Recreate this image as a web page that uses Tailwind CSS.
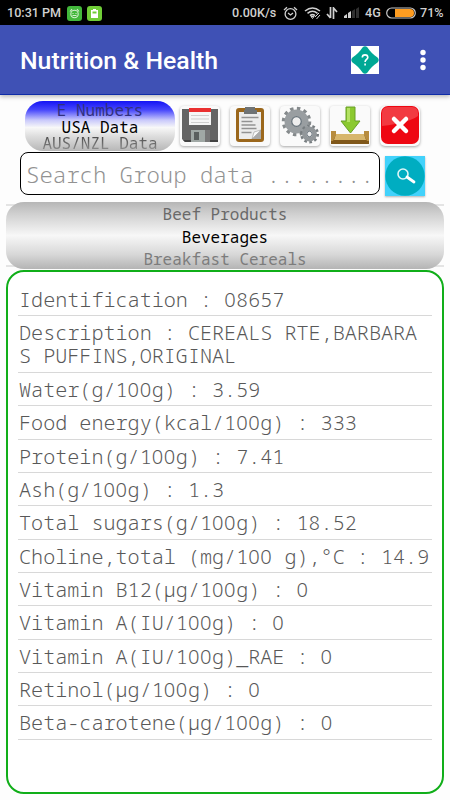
<!DOCTYPE html>
<html lang="en"><head><meta charset="utf-8"><title>Nutrition &amp; Health</title>
<script src="https://cdn.jsdelivr.net/npm/@tailwindcss/browser@4"></script></head>
<body class="w-[450px] h-[800px] overflow-hidden bg-[#fdfdfd] font-['Droid_Sans_Mono','Noto_Sans_Mono','DejaVu_Sans_Mono',monospace]">
<div class="flex h-full flex-col">
<div class="flex h-[25px] shrink-0 items-center bg-black pl-[7px] pr-[8px] pt-px font-['Roboto',sans-serif] text-[12.6px] font-medium text-[#d0d0d0]">
  <span class="w-[60px] whitespace-nowrap">10:31 PM</span>
  <svg class="h-[15px] w-[15px]" viewBox="0 0 15 15"><rect width="15" height="15" rx="3" fill="#43b83b"/><g fill="none" stroke="#d5efd0" stroke-width="1.1"><circle cx="7.5" cy="8" r="3.7"/><path d="M3 5.5 5 3.2M12 5.5 10 3.2M5.5 7.5h1M8.500 7.500h1M5.500 9.500h4"/></g></svg>
  <svg class="ml-[5px] h-[15px] w-[15px]" viewBox="0 0 15 15"><rect width="15" height="15" rx="3" fill="#70ce37"/><path d="M6 3h3v1h2v8H4V4h2z" fill="#fff"/><path d="M5.500 5.500h4v2h-4z" fill="#70ce37"/></svg>
  <span class="ml-auto w-[51px] whitespace-nowrap">0.00K/s</span>
  <svg class="h-[15px] w-[15px]" viewBox="0 0 15 15" fill="none" stroke="#d0d0d0" stroke-width="1.300"><circle cx="7.500" cy="8" r="5.4"/><path d="M1 4 4 1.200M14 4 11 1.200M5 7l2.500 2L10 7"/></svg>
  <svg class="ml-[6px] h-[14px] w-[17px]" viewBox="0 0 17 14" fill="none" stroke="#d0d0d0" stroke-width="1.600"><path d="M1 5Q8.500-1 16 5M3.500 7.300Q8.500 3.300 13.500 7.300M6 9.600q2.500-2 5 0"/><path d="m7 10.500 1.500 2 1.500-2zM11 11l4-4M12.500 13l3.500-4" stroke-width="1"/></svg>
  <svg class="ml-[5px] h-[12px] w-[12px]" viewBox="0 0 12 12" fill="none" stroke="#d0d0d0" stroke-width="1.700"><path d="M4.500 0v11M1 7l3.500 4M7.500 12V1L11 5"/></svg>
  <svg class="ml-[6px] h-[12px] w-[16px]" viewBox="0 0 16 12"><path d="M0 11V9l3-2v4zM4 11V6l3-2v7z" fill="#d0d0d0"/><path d="M8 11V4l3-2v9zM12 11V2l3-2v11z" fill="#303030"/></svg>
  <span class="ml-[5px] w-[21px]">4G</span>
  <svg class="h-[12px] w-[30px]" viewBox="0 0 30 12"><rect x=".7" y="1" width="28.600" height="10" rx="5" fill="none" stroke="#c8c8c8" stroke-width="1.200"/><path d="M9 2h15q4 0 4 4t-4 4H9z" fill="#ff9d20"/></svg>
  <span class="ml-[4px] w-[22px] whitespace-nowrap">71%</span>
</div>
<header class="z-10 flex h-[70px] shrink-0 items-center border-b border-[#0f2ca8] bg-[#3f51b5] pl-[20px] pr-[24px] shadow-[0_2px_4px_rgba(0,0,0,0.25)]">
  <h1 class="pt-[3px] font-['Roboto',sans-serif] text-[24.800px] font-medium text-white whitespace-nowrap">Nutrition &amp; Health</h1>
  <svg class="ml-auto h-[28px] w-[28px]" viewBox="0 0 28 28"><path d="M0 0h28v28H0z" fill="#fff"/><path d="M11.500 1.500q2.500-2.500 5 0c3 4.500 5.500 7 10 10q2.500 2.500 0 5c-4.500 3-7 5.500-10 10q-2.500 2.500-5 0c-3-4.500-5.500-7-10-10q-2.500-2.500 0-5c4.500-3 7-5.500 10-10" fill="#00a895"/><path d="M11.300 11.500c0-3.500 5.500-3.500 5.500 0 0 2-2.700 2-2.700 4.500M14.100 17.500v2" fill="none" stroke="#fff" stroke-width="1.600"/></svg>
  <svg class="ml-[41px] h-[22px] w-[6px]" viewBox="0 0 6 22" fill="#fff"><circle cx="3" cy="3.500" r="2.700"/><circle cx="3" cy="11" r="2.700"/><circle cx="3" cy="18.500" r="2.700"/></svg>
</header>
<div class="flex h-[57px] shrink-0 items-start pl-[25px] pt-[6px]">
  <div class="flex h-[50px] w-[150px] flex-col items-center overflow-hidden rounded-[18px] bg-[linear-gradient(#1414f5_0%,#4848fc_18%,#c8c8fb_38%,#f8f8f8_53%,#dedede_70%,#b7b7b7_100%)] text-[16px] leading-[16.500px] whitespace-pre">
    <span class="mt-px text-[#30307f]">E Numbers</span><span class="text-black">USA Data</span><span class="bg-linear-to-b from-[#444] to-[#999] bg-clip-text text-transparent">AUS/NZL Data</span>
  </div>
  <div class="ml-[5px] mt-[5px] flex gap-[10px]">
    <svg class="h-[40px] w-[40px] rounded-[4px] bg-[#fafafa] shadow-[0_1px_3px_rgba(0,0,0,0.350)]" viewBox="0 0 40 40"><path d="M2 3h36v33H5l-3-3z" fill="#646464"/><path d="M9 2h22v17H9z" fill="#f6f6f6"/><path d="M9 2h22v4H9z" fill="#ea3030"/><path d="M11 9.500h18M11 13h18M11 16.500h18" stroke="#cfcfcf"/><path d="M3 34h35v2H5z" fill="#444"/><path d="M11 24h19v12H11z" fill="#a0a8a5"/><path d="M14 26h5v8h-5z" fill="#5a5f5e"/><path d="M25 24h5v12h-5z" fill="#777"/></svg>
    <svg class="h-[40px] w-[40px] rounded-[4px] bg-[#fafafa] shadow-[0_1px_3px_rgba(0,0,0,0.350)]" viewBox="0 0 40 40"><rect x="6" y="2" width="28" height="34" rx="3" fill="#9b671c"/><path d="M9 6h22v27H9z" fill="#ececec"/><path d="M11.500 11.500h17M11.500 15.500h11M11.500 19h14M11.500 22.500h15M11.500 26.500h10" stroke="#929292" stroke-width="1.500"/><path d="m22 33 9-9v9z" fill="#aaa"/><path d="m22 33 2-7 7-2z" fill="#f9f9f9" stroke="#999" stroke-width=".6"/><path d="M15 1h10v3h2v4H14V4h1z" fill="#6f7375"/></svg>
    <svg class="h-[40px] w-[40px] rounded-[4px] bg-[#fafafa] shadow-[0_1px_3px_rgba(0,0,0,0.350)]" viewBox="0 0 40 40"><circle cx="16.500" cy="15.500" r="13" fill="none" stroke="#858a8c" stroke-width="3.500" stroke-dasharray="3.400 3.407"/><circle cx="16.500" cy="15.500" r="8.500" fill="none" stroke="#999ea1" stroke-width="7"/><circle cx="16.500" cy="15.500" r="4.800" fill="#eee" stroke="#667179" stroke-width="1.300"/><circle cx="29.500" cy="28" r="8" fill="none" stroke="#777d80" stroke-width="3" stroke-dasharray="2.600 2.430"/><circle cx="29.500" cy="28" r="5.200" fill="none" stroke="#92979a" stroke-width="4.500"/><circle cx="29.500" cy="28" r="2.700" fill="#eee" stroke="#667179"/></svg>
    <svg class="h-[40px] w-[40px] rounded-[3px] bg-[#fafafa] shadow-[0_1px_3px_rgba(0,0,0,0.350)]" viewBox="0 0 40 40"><path d="M1 25 6 25v5h28v-5h5v13H1z" fill="#80571a"/><path d="M6 28h28l2 6H4z" fill="#d7b66c"/><path d="m1 25 5 0v4l-3 6H1zM39 25h-5v4l3 6h2z" fill="#b78c3d"/><path d="M16 1h9v14h5L20.500 27 11 15h5z" fill="#8bc92f" stroke="#699f27"/><path d="M17 2h3v14h-3z" fill="#b4e263"/></svg>
    <svg class="h-[40px] w-[40px] rounded-[5px] bg-[#fafafa] shadow-[0_1px_3px_rgba(0,0,0,0.350)]" viewBox="0 0 40 40"><rect x="1" y="0" width="38" height="38" rx="7" fill="#ee0712"/><path d="M2 7q0-6 6-6h24q6 0 6 6v3Q28 17 2 20z" fill="#f23a41"/><path d="m14 13 12 12M26 13 14 25" stroke="#fff" stroke-width="4.500" stroke-linecap="round"/></svg>
  </div>
</div>
<div class="flex h-[50px] shrink-0 items-start pl-[20px]">
  <div class="flex h-[43px] w-[360px] items-center overflow-hidden rounded-[8px] border border-black bg-white pl-[5px] pt-[2px] text-[22.300px] font-[360] text-[#929292] whitespace-pre">Search Group data ........</div>
  <svg class="ml-[5px] mt-[4px] h-[40px] w-[40px] shadow-[0_1px_2px_rgba(0,0,0,0.300)]" viewBox="0 0 40 40"><path d="M0 0h40v40H0z" fill="#43d2fb"/><circle cx="20" cy="20" r="19.700" fill="#00adc1"/><circle cx="18" cy="18" r="5" fill="none" stroke="#ddf6f8" stroke-width="1.600"/><path d="m22 21 7 5" stroke="#fff" stroke-width="2.800" stroke-linecap="round"/></svg>
</div>
<div class="h-[68px] shrink-0 bg-[linear-gradient(transparent_2px,#e4e4e4_2px,#e4e4e4_4px,transparent_4px,transparent_63px,#e4e4e4_63px,#e4e4e4_65px,transparent_65px)] mx-[6px]">
<div class="flex h-[67px] flex-col items-center overflow-hidden rounded-[18px] bg-[linear-gradient(#b6b6b6_0%,#d0d0d0_18%,#f7f7f7_50%,#d8d8d8_78%,#b4b4b4_100%)] pt-px text-[16px] leading-[22.600px] whitespace-pre">
  <span class="text-[#696969]">Beef Products</span><span class="text-black">Beverages</span><span class="text-[#7c7c7c]">Breakfast Cereals</span>
</div></div>
<main class="mx-[6px] mb-[6px] min-h-0 flex-1 rounded-[18px] border-2 border-[#10ae19] bg-white px-[10px] pt-[10.500px] text-[20.120px] font-[360] leading-[23.400px] text-[#585858]">
<div class="flex flex-col *:h-[33.350px] *:border-b *:border-[#d8d8d8] *:px-px *:pt-[5px] *:whitespace-pre [&_i]:font-['Noto_Sans',sans-serif] [&_i]:not-italic [&_i]:tracking-[0.560px]"><div>Identification : <i>0</i>8657</div><div class="h-[57px]! leading-[23.500px]">Description : CEREALS RTE,BARBARA
S PUFFINS,ORIGINAL</div><div>Water(g/1<i>00</i>g) : 3.59</div><div>Food energy(kcal/1<i>00</i>g) : 333</div><div>Protein(g/1<i>00</i>g) : 7.41</div><div>Ash(g/1<i>00</i>g) : 1.3</div><div>Total sugars(g/1<i>00</i>g) : 18.52</div><div>Choline,total (mg/1<i>00</i> g),°C : 14.9</div><div>Vitamin B12(µg/1<i>00</i>g) : <i>0</i></div><div>Vitamin A(IU/1<i>00</i>g) : <i>0</i></div><div>Vitamin A(IU/1<i>00</i>g)_RAE : <i>0</i></div><div>Retinol(µg/1<i>00</i>g) : <i>0</i></div><div>Beta-carotene(µg/1<i>00</i>g) : <i>0</i></div></div></main>
</div></body></html>
